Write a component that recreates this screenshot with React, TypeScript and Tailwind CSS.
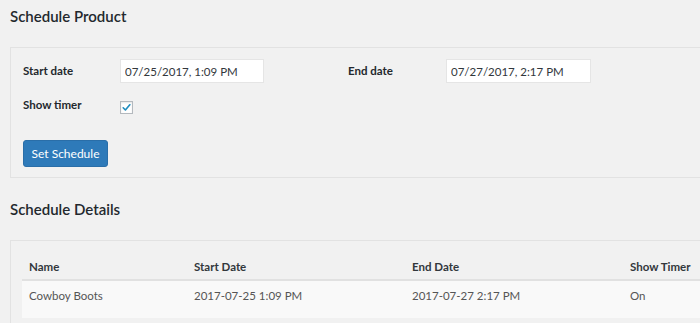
import React from 'react';

const rows = [
  { name: 'Cowboy Boots', start: '2017-07-25 1:09 PM', end: '2017-07-27 2:17 PM', timer: 'On' }
];

const App: React.FC = () => {
  return (
    <div className="w-[700px] h-[323px] overflow-hidden bg-[#f1f1f1] text-[#23282d] font-['Lato',sans-serif]">
      <h2 className="pl-[10px] pt-[5px] h-[47px] text-[15px] leading-[22px] font-semibold">Schedule Product</h2>

      <section className="ml-[10px] w-[720px] h-[131px] border border-[#e2e2e2] bg-[#f1f1f1] pl-[12px] pt-[11px]">
        <div className="flex items-center h-[24px]">
          <label className="w-[97px] text-[11.5px] font-bold text-[#23282d]">Start date</label>
          <input
            readOnly
            value="07/25/2017, 1:09 PM"
            className="w-[144px] h-[24px] bg-white border border-[#e5e5e5] px-[4px] text-[11.5px] text-[#32373c] outline-none"
          />
          <label className="ml-[84px] w-[98px] text-[11.5px] font-bold text-[#23282d]">End date</label>
          <input
            readOnly
            value="07/27/2017, 2:17 PM"
            className="w-[145px] h-[24px] bg-white border border-[#e5e5e5] px-[4px] text-[11.5px] text-[#32373c] outline-none"
          />
        </div>

        <div className="flex items-start h-[14px] mt-[18px]">
          <label className="w-[97px] text-[11.5px] font-bold leading-[12px] -mt-[2px]">Show timer</label>
          <span className="w-[13px] h-[13px] border border-[#b4b9be] bg-white flex items-center justify-center shadow-[inset_0_1px_2px_rgba(0,0,0,0.1)]">
            <svg viewBox="0 0 20 20" className="w-[11px] h-[11px]">
              <path d="M4 10.5 L8 14.5 L16 5" fill="none" stroke="#1e8cbe" strokeWidth="3" strokeLinecap="round" strokeLinejoin="round" />
            </svg>
          </span>
        </div>

        <button
          type="button"
          className="mt-[25px] w-[85px] h-[27px] rounded-[3px] bg-[#2e7ab9] border border-[#2a6ea8] text-white text-[12px]"
        >
          Set Schedule
        </button>
      </section>

      <h2 className="pl-[10px] pt-[20px] h-[62px] text-[15px] leading-[22px] font-semibold">Schedule Details</h2>

      <section className="ml-[10px] w-[720px] h-[100px] border border-[#e2e2e2] bg-[#f1f1f1] pl-[11px] pt-[13px]">
        <table className="w-[709px] text-[11.5px] border-collapse">
          <thead>
            <tr className="h-[26px] border-b-2 border-[#e1e1e1] text-left">
              <th className="pl-[7px] w-[172px] font-bold text-[#32373c]">Name</th>
              <th className="w-[218px] font-bold text-[#32373c]">Start Date</th>
              <th className="w-[218px] font-bold text-[#32373c]">End Date</th>
              <th className="font-bold text-[#32373c]">Show Timer</th>
            </tr>
          </thead>
          <tbody>
            {rows.map((r) => (
              <tr key={r.name} className="h-[38px] bg-[#f9f9f9] text-[#555] align-top">
                <td className="pl-[7px] pt-[6px]">{r.name}</td>
                <td className="pt-[6px]">{r.start}</td>
                <td className="pt-[6px]">{r.end}</td>
                <td className="pt-[6px]">{r.timer}</td>
              </tr>
            ))}
          </tbody>
        </table>
      </section>
    </div>
  );
};

export default App;
